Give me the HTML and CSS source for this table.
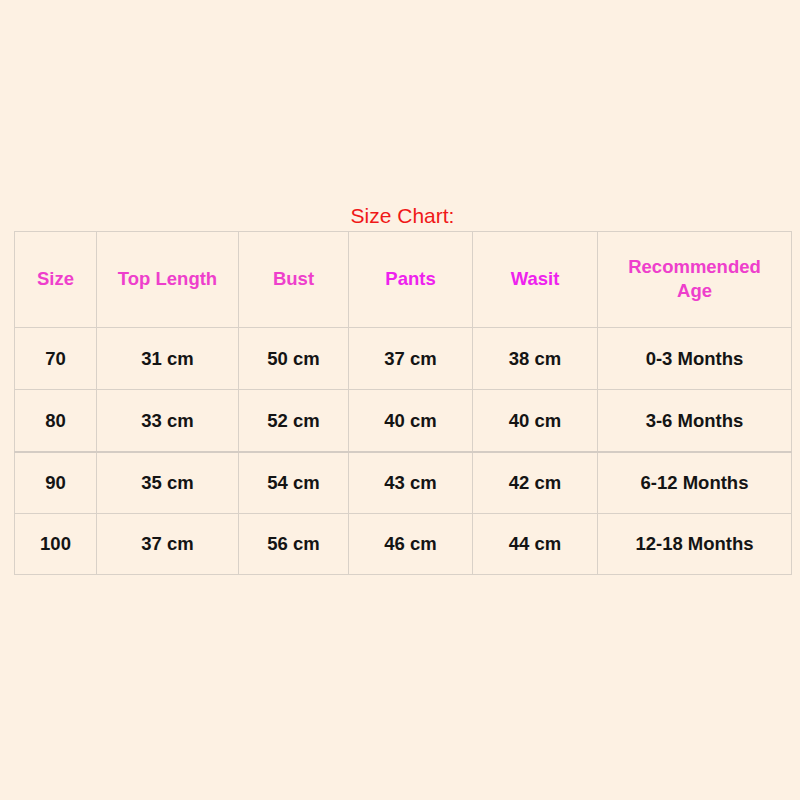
FILE: index.html
```html
<!DOCTYPE html>
<html>
<head>
<meta charset="utf-8">
<link rel="stylesheet" href="styles.css">
</head>
<body>
<div class="page">
  <div class="title">Size Chart:</div>
  <table class="chart">
    <colgroup>
      <col class="c1"><col class="c2"><col class="c3"><col class="c4"><col class="c5"><col class="c6">
    </colgroup>
    <thead>
      <tr>
        <th>Size</th>
        <th>Top Length</th>
        <th>Bust</th>
        <th class="mag">Pants</th>
        <th class="mag">Wasit</th>
        <th>Recommended<br>Age</th>
      </tr>
    </thead>
    <tbody>
      <tr><td>70</td><td>31 cm</td><td>50 cm</td><td>37 cm</td><td>38 cm</td><td>0-3 Months</td></tr>
      <tr><td>80</td><td>33 cm</td><td>52 cm</td><td>40 cm</td><td>40 cm</td><td>3-6 Months</td></tr>
      <tr class="thick"><td>90</td><td>35 cm</td><td>54 cm</td><td>43 cm</td><td>42 cm</td><td>6-12 Months</td></tr>
      <tr class="last"><td>100</td><td>37 cm</td><td>56 cm</td><td>46 cm</td><td>44 cm</td><td>12-18 Months</td></tr>
    </tbody>
  </table>
</div>
</body>
</html>
```
FILE: styles.css
```css
html, body {
  margin: 0;
  padding: 0;
  background: #fdf1e3;
  height: 100%;
}
.page {
  padding: 203px 9px 0 14px;
  font-family: "Liberation Sans", Arial, sans-serif;
}
.title {
  text-align: center;
  color: #f01818;
  font-size: 21px;
  line-height: 25px;
  height: 28px;
}
.chart {
  border-collapse: collapse;
  width: 777px;
  table-layout: fixed;
}
.c1 { width: 82px; }
.c2 { width: 142px; }
.c3 { width: 110px; }
.c4 { width: 124px; }
.c5 { width: 125px; }
.c6 { width: 194px; }
.chart th, .chart td {
  border: 1px solid #d9d1c8;
  text-align: center;
  vertical-align: middle;
  font-weight: bold;
  font-size: 18.5px;
  line-height: 24px;
  padding: 0;
}
.chart th {
  height: 93px;
  color: #ee3fcc;
  padding-bottom: 2px;
}
.chart th.mag {
  color: #ee22ee;
}
.chart td {
  height: 61px;
  color: #141414;
}
.chart tr.thick td {
  border-top: 2px solid #d4ccc4;
  height: 60px;
}
.chart tr.last td {
  height: 60px;
}
```
